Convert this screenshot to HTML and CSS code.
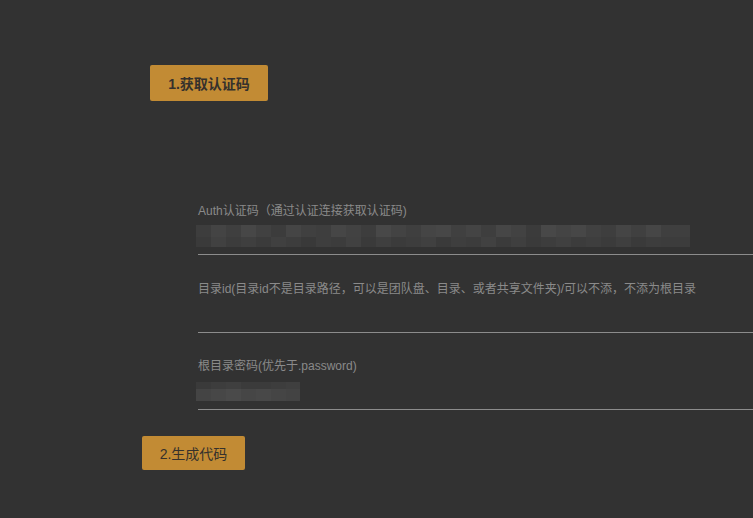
FILE: index.html
```html
<!DOCTYPE html>
<html lang="zh-CN">
<head>
  <meta charset="UTF-8">
  <meta name="viewport" content="width=device-width, initial-scale=1.0">
  <title>获取认证码</title>
  <link rel="stylesheet" href="styles.css">
</head>
<body>
  <div class="page">
    <button class="btn btn-auth">1.获取认证码</button>

    <div class="form">
      <div class="field">
        <label class="label">Auth认证码（通过认证连接获取认证码)</label>
        <div class="input">
          <div class="mosaic mosaic-long"></div>
        </div>
      </div>

      <div class="field">
        <label class="label">目录id(目录id不是目录路径，可以是团队盘、目录、或者共享文件夹)/可以不添，不添为根目录</label>
        <div class="input"></div>
      </div>

      <div class="field">
        <label class="label">根目录密码(优先于.password)</label>
        <div class="input">
          <div class="mosaic mosaic-short"></div>
        </div>
      </div>
    </div>

    <button class="btn btn-gen">2.生成代码</button>
  </div>
</body>
</html>
```

FILE: styles.css
```css
html, body {
  margin: 0;
  padding: 0;
  height: 100%;
  overflow: hidden;
}
body {
  background-color: #323232;
  font-family: "Liberation Sans", "Noto Sans CJK SC", sans-serif;
  color: #8a8a8a;
}
.page {
  padding-top: 65px;
}
.btn {
  display: block;
  background-color: #c28b34;
  color: #35312c;
  border: none;
  border-radius: 2px;
  font-family: "Liberation Sans", "Noto Sans CJK SC", sans-serif;
  font-size: 14px;
  cursor: pointer;
}
.btn-auth {
  margin-left: 150px;
  width: 118px;
  height: 36px;
  font-weight: bold;
}
.btn-gen {
  margin-left: 142px;
  margin-top: 26px;
  width: 103px;
  height: 34px;
}
.form {
  margin-top: 102px;
  margin-left: 198px;
}
.field {
  margin-bottom: 25px;
}
.field:first-child {
  margin-bottom: 26px;
}
.field:last-child {
  margin-bottom: 0;
}
.label {
  display: block;
  font-size: 12px;
  line-height: 16px;
  height: 16px;
  white-space: nowrap;
}
.input {
  position: relative;
  height: 35px;
  border-bottom: 1px solid #8c8c8c;
}
.mosaic {
  position: absolute;
  left: -2px;
}
.mosaic-long {
  top: 6px;
  width: 494px;
  height: 22px;
  background:
    linear-gradient(90deg,
      #3d3d3d 0 15px, #444 15px 30px, #3f3f3f 30px 45px, #474747 45px 60px,
      #414141 60px 75px, #3c3c3c 75px 90px, #454545 90px 105px, #404040 105px 120px,
      #3e3e3e 120px 135px, #464646 135px 150px, #424242 150px 165px, #3d3d3d 165px 180px,
      #484848 180px 195px, #434343 195px 210px, #3f3f3f 210px 225px, #454545 225px 240px,
      #474747 240px 255px, #404040 255px 270px, #444 270px 285px, #3e3e3e 285px 300px,
      #464646 300px 315px, #424242 315px 330px, #3b3b3b 330px 345px, #484848 345px 360px,
      #444 360px 375px, #474747 375px 390px, #414141 390px 405px, #3e3e3e 405px 420px,
      #454545 420px 435px, #404040 435px 450px, #464646 450px 465px, #3f3f3f 465px 494px)
      top / 100% 12px no-repeat,
    linear-gradient(90deg,
      #3a3a3a 0 15px, #414141 15px 30px, #3c3c3c 30px 45px, #3f3f3f 45px 60px,
      #3b3b3b 60px 75px, #404040 75px 90px, #3d3d3d 90px 105px, #393939 105px 120px,
      #3e3e3e 120px 135px, #3c3c3c 135px 150px, #414141 150px 165px, #3a3a3a 165px 180px,
      #3f3f3f 180px 195px, #3b3b3b 195px 210px, #3d3d3d 210px 225px, #404040 225px 240px,
      #3a3a3a 240px 255px, #3e3e3e 255px 270px, #3c3c3c 270px 285px, #414141 285px 300px,
      #3b3b3b 300px 315px, #3f3f3f 315px 330px, #3a3a3a 330px 345px, #3d3d3d 345px 360px,
      #404040 360px 375px, #3c3c3c 375px 390px, #3e3e3e 390px 405px, #3b3b3b 405px 420px,
      #3f3f3f 420px 435px, #3a3a3a 435px 450px, #3d3d3d 450px 465px, #3c3c3c 465px 494px)
      bottom / 100% 10px no-repeat;
}
.mosaic-short {
  top: 8px;
  width: 104px;
  height: 19px;
  background:
    linear-gradient(90deg,
      #3a3a3a 0 15px, #3d3d3d 15px 30px, #3f3f3f 30px 45px, #3b3b3b 45px 75px,
      #3d3d3d 75px 90px, #3f3f3f 90px 104px)
      top / 100% 7px no-repeat,
    linear-gradient(90deg,
      #444 0 15px, #474747 15px 30px, #4a4a4a 30px 45px, #464646 45px 60px,
      #484848 60px 75px, #454545 75px 90px, #434343 90px 104px)
      bottom / 100% 12px no-repeat;
}
```
